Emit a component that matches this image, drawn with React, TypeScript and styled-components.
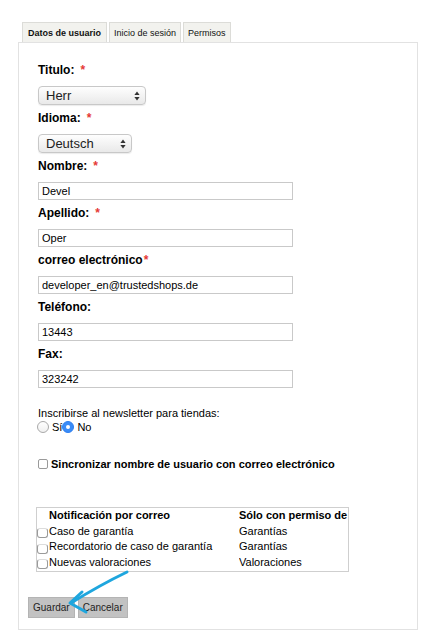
import React from "react";
import styled, { createGlobalStyle } from "styled-components";

const GlobalStyle = createGlobalStyle`
  html, body {
    margin: 0;
    padding: 0;
    background: #fff;
  }
  body {
    font-family: "Liberation Sans", Arial, sans-serif;
    color: #000;
  }
`;

const Page = styled.div`
  position: relative;
  width: 444px;
  height: 644px;
  padding: 22px 0 0 18px;
  box-sizing: border-box;
`;

const TabBar = styled.div`
  display: flex;
  gap: 2px;
  margin-left: 4px;
`;

const Tab = styled.div<{ $active?: boolean }>`
  height: 20px;
  box-sizing: border-box;
  padding: 0 ${(p) => (p.$active ? 5 : 4)}px;
  display: flex;
  align-items: center;
  border: 1px solid #dcdcd8;
  border-bottom: none;
  background: #f2f2ee;
  font-size: 9px;
  font-weight: ${(p) => (p.$active ? 700 : 400)};
  color: #111;
`;

const Panel = styled.div`
  width: 400px;
  height: 588px;
  box-sizing: border-box;
  border: 1px solid #e2e2e2;
  padding: 20px 0 13px 9px;
  display: flex;
  flex-direction: column;
`;

const Content = styled.div`
  padding-left: 10px;
  display: flex;
  flex-direction: column;
`;

const Fields = styled.div`
  display: flex;
  flex-direction: column;
  gap: 6px;
`;

const Field = styled.div`
  display: flex;
  flex-direction: column;
  align-items: flex-start;
  gap: 8px;
`;

const Label = styled.div`
  font-size: 12px;
  font-weight: 700;
  line-height: 15px;
`;

const Req = styled.span<{ $tight?: boolean }>`
  color: #e53935;
  margin-left: ${(p) => (p.$tight ? 1 : 6)}px;
`;

const SelectWrap = styled.div`
  position: relative;
  display: flex;
`;

const Select = styled.select<{ $w: number }>`
  appearance: none;
  -webkit-appearance: none;
  width: ${(p) => p.$w}px;
  height: 19px;
  box-sizing: border-box;
  border: 1px solid #c8c8c8;
  border-radius: 4px;
  background: linear-gradient(#fefefe, #e9e9e9);
  box-shadow: 0 1px 1px rgba(0, 0, 0, 0.08);
  font-family: "Liberation Sans", Arial, sans-serif;
  font-size: 13px;
  color: #222;
  padding: 0 0 0 7px;
  margin: 0;
  outline: none;
`;

const SelectArrows = styled.svg`
  position: absolute;
  right: 6px;
  top: 5px;
  pointer-events: none;
`;

const TextInput = styled.input`
  width: 255px;
  height: 18px;
  box-sizing: border-box;
  border: 1px solid #c9c9c9;
  padding: 0 3px;
  margin: 0;
  font-family: "Liberation Sans", Arial, sans-serif;
  font-size: 11px;
  color: #000;
  outline: none;
`;

const Newsletter = styled.div`
  margin-top: 19px;
  display: flex;
  flex-direction: column;
`;

const PlainText = styled.div`
  font-size: 11px;
  line-height: 13px;
`;

const RadioRow = styled.div`
  display: flex;
  align-items: center;
  height: 14px;
  margin-left: -1px;
`;

const RadioOption = styled.label`
  display: flex;
  align-items: center;
  font-size: 11px;
`;

const Radio = styled.span<{ $checked?: boolean }>`
  width: 12px;
  height: 12px;
  box-sizing: border-box;
  border-radius: 50%;
  margin-right: 3px;
  border: 1px solid ${(p) => (p.$checked ? "#2f7ff0" : "#a9a9a9")};
  background: ${(p) =>
    p.$checked ? "#3a8cf7" : "linear-gradient(#ffffff, #f0f0f0)"};
  display: flex;
  align-items: center;
  justify-content: center;
  &::after {
    content: "";
    width: 4px;
    height: 4px;
    border-radius: 50%;
    background: #fff;
    display: ${(p) => (p.$checked ? "block" : "none")};
  }
`;

const SyncRow = styled.label`
  margin-top: 23px;
  display: flex;
  align-items: center;
  height: 13px;
  font-size: 11px;
  font-weight: 700;
`;

const Box = styled.span`
  width: 10px;
  height: 10px;
  box-sizing: border-box;
  border: 1px solid #9a9a9a;
  border-radius: 2px;
  background: #fff;
  margin-right: 3px;
  flex: none;
`;

const Table = styled.div`
  margin-top: 37px;
  margin-left: -2px;
  width: 313px;
  box-sizing: border-box;
  border: 1px solid #cfcfcf;
  padding-bottom: 1px;
  display: grid;
  grid-template-columns: 202px 1fr;
  font-size: 11px;
`;

const Cell = styled.div<{ $head?: boolean; $indent?: boolean }>`
  height: 15.5px;
  line-height: 15px;
  display: flex;
  align-items: center;
  white-space: nowrap;
  overflow: hidden;
  font-weight: ${(p) => (p.$head ? 700 : 400)};
  padding-left: ${(p) => (p.$indent ? 12 : 0)}px;
`;

const RowBox = styled(Box)`
  width: 11px;
  height: 10px;
  margin: 4px 1px 0 0;
  border-top-color: #dcdcdc;
  border-radius: 3px;
`;

const Buttons = styled.div`
  margin-top: 25px;
  display: flex;
  gap: 3px;
`;

const Button = styled.button`
  height: 21px;
  box-sizing: border-box;
  padding: 0 4px;
  border: 1px solid #b4b4b4;
  background: #c2c2c2;
  font-family: "Liberation Sans", Arial, sans-serif;
  font-size: 10px;
  color: #222;
  margin: 0;
`;

const Annotation = styled.svg`
  position: absolute;
  left: 60px;
  top: 565px;
  pointer-events: none;
`;

const Arrows = () => (
  <SelectArrows width="6" height="10" viewBox="0 0 6 10">
    <path d="M3 0.5 L5.6 4 L0.4 4 Z" fill="#333" />
    <path d="M3 9.5 L5.6 6 L0.4 6 Z" fill="#333" />
  </SelectArrows>
);

const rows = [
  ["Caso de garantía", "Garantías"],
  ["Recordatorio de caso de garantía", "Garantías"],
  ["Nuevas valoraciones", "Valoraciones"],
];

const inputs: { label: string; value: string; req?: boolean; tight?: boolean }[] = [
  { label: "Nombre:", value: "Devel", req: true },
  { label: "Apellido:", value: "Oper", req: true },
  { label: "correo electrónico", value: "developer_en@trustedshops.de", req: true, tight: true },
  { label: "Teléfono:", value: "13443" },
  { label: "Fax:", value: "323242" },
];

export default function App() {
  return (
    <>
      <GlobalStyle />
      <Page>
        <TabBar>
          <Tab $active>Datos de usuario</Tab>
          <Tab>Inicio de sesión</Tab>
          <Tab>Permisos</Tab>
        </TabBar>
        <Panel>
          <Content>
            <Fields>
              <Field>
                <Label>
                  Titulo:<Req>*</Req>
                </Label>
                <SelectWrap>
                  <Select $w={108} defaultValue="Herr">
                    <option>Herr</option>
                    <option>Frau</option>
                  </Select>
                  <Arrows />
                </SelectWrap>
              </Field>
              <Field>
                <Label>
                  Idioma:<Req>*</Req>
                </Label>
                <SelectWrap>
                  <Select $w={94} defaultValue="Deutsch">
                    <option>Deutsch</option>
                    <option>English</option>
                  </Select>
                  <Arrows />
                </SelectWrap>
              </Field>
              {inputs.map((f) => (
                <Field key={f.label}>
                  <Label>
                    {f.label}
                    {f.req && <Req $tight={f.tight}>*</Req>}
                  </Label>
                  <TextInput defaultValue={f.value} />
                </Field>
              ))}
            </Fields>

            <Newsletter>
              <PlainText>Inscribirse al newsletter para tiendas:</PlainText>
              <RadioRow>
                <RadioOption>
                  <Radio />
                  Sí
                </RadioOption>
                <RadioOption>
                  <Radio $checked />
                  No
                </RadioOption>
              </RadioRow>
            </Newsletter>

            <SyncRow>
              <Box />
              Sincronizar nombre de usuario con correo electrónico
            </SyncRow>

            <Table>
              <Cell $head $indent>Notificación por correo</Cell>
              <Cell $head>Sólo con permiso de</Cell>
              {rows.map(([name, perm]) => (
                <React.Fragment key={name}>
                  <Cell>
                    <RowBox />
                    {name}
                  </Cell>
                  <Cell>{perm}</Cell>
                </React.Fragment>
              ))}
            </Table>
          </Content>

          <Buttons>
            <Button>Guardar</Button>
            <Button>Cancelar</Button>
          </Buttons>
        </Panel>

        <Annotation width="75" height="55" viewBox="60 565 75 55">
          <path
            d="M127 572 Q100 585 71 603"
            fill="none"
            stroke="#1ea6de"
            strokeWidth="3"
            strokeLinecap="round"
          />
          <path
            d="M82 592 L70 603 L86 612"
            fill="none"
            stroke="#1ea6de"
            strokeWidth="3"
            strokeLinecap="round"
            strokeLinejoin="round"
          />
        </Annotation>
      </Page>
    </>
  );
}
